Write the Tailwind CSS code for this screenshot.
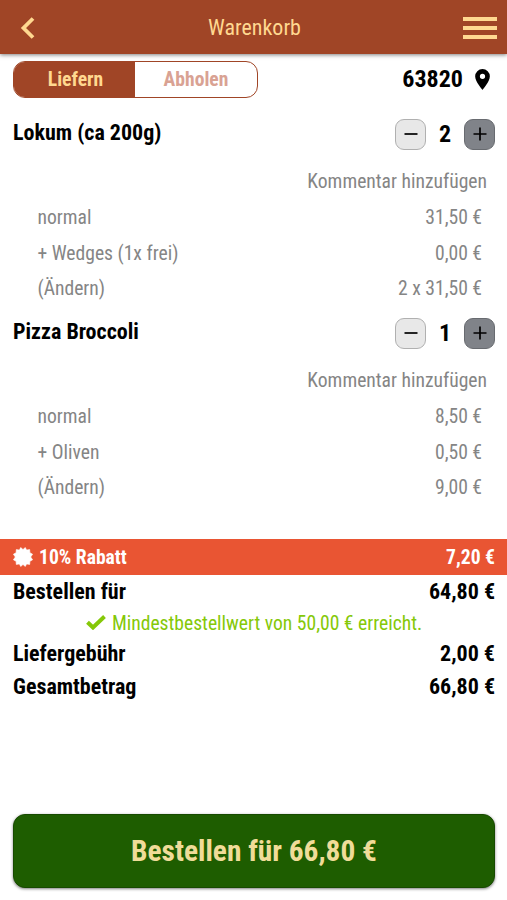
<!DOCTYPE html>
<html lang="de">
<head>
  <meta charset="UTF-8" />
  <meta name="viewport" content="width=device-width, initial-scale=1.0"/>
  <title>Warenkorb</title>
  <script src="https://cdn.jsdelivr.net/npm/@tailwindcss/browser@4"></script>
</head>
<body class="bg-white min-h-screen flex flex-col font-['Roboto_Condensed','Roboto',sans-serif] font-stretch-condensed text-[22px] text-black">

  <!-- Header -->
  <header class="h-[54px] shrink-0 bg-[#a04526] shadow-[0_1px_4px_rgba(0,0,0,0.5)] flex items-center justify-between pl-5 pr-[10px] text-[#ffd890]">
    <button class="w-[26px]">
      <svg class="w-[15px] h-[22px] mt-[2px]" viewBox="0 0 15 22" fill="none" stroke="currentColor" stroke-width="3.8"><path d="M13 1.500 3.500 11l9.500 9.500"/></svg>
    </button>
    <h1>Warenkorb</h1>
    <button>
      <svg class="w-[34px] h-6 mt-[2px]" viewBox="0 0 34 24" fill="currentColor"><path d="M0 1h34v4H0zM0 10h34v4H0zM0 19h34v4H0z"/></svg>
    </button>
  </header>

  <!-- Delivery mode -->
  <div class="h-[50px] -mb-[2px] flex items-center justify-between px-[13px]">
    <div class="w-[245px] h-[37px] flex rounded-[12px] border border-[#a04526] overflow-hidden text-[19.6px] font-bold">
      <button class="w-[121px] pl-[2px] pt-[2px] bg-[#a04526] text-[#ffd890]">Liefern</button>
      <button class="flex-1 pt-[2px] text-[#d9a293]">Abholen</button>
    </div>
    <div class="flex items-center gap-3 pr-1 text-[24px] font-bold">
      <span>63820</span>
      <svg class="w-[15px] h-[21px]" viewBox="0 0 14 20" fill="currentColor"><path fill-rule="evenodd" d="M7 0a7 7 0 0 0-7 7c0 5.2 7 13 7 13s7-7.800 7-13a7 7 0 0 0-7-7Zm0 9.500a2.500 2.500 0 1 1 0-5 2.500 2.500 0 0 1 0 5Z"/></svg>
    </div>
  </div>

  <!-- First item -->
  <section class="h-[199px] pt-[14px]">
    <div class="h-9 flex items-center justify-between pl-[13px] pr-3 font-bold">
      <h2 class="-mt-[3px]">Lokum (ca 200g)</h2>
      <div class="flex items-center text-[24px]">
        <button class="w-[31px] h-[31px] rounded-[9px] border border-[#b0b0b0] bg-[#e8e8e8] flex items-center justify-center">
          <svg class="w-[14px] h-[14px]" viewBox="0 0 14 14" stroke="currentColor" stroke-width="1.7"><path d="M0.500 7h13"/></svg>
        </button>
        <span class="w-[38px] text-center">2</span>
        <button class="w-[31px] h-[31px] rounded-[9px] border border-[#686b70] bg-[#808389] flex items-center justify-center">
          <svg class="w-[14px] h-[14px]" viewBox="0 0 14 14" stroke="currentColor" stroke-width="1.7"><path d="M0.500 7h13M7 0.500v13"/></svg>
        </button>
      </div>
    </div>
    <p class="mt-3 pr-5 leading-[36px] text-right text-[19.6px] text-[#858585]">Kommentar hinzufügen</p>
    <div class="pl-[37.500px] pr-[25px] leading-[35.5px] text-[19.6px] text-[#858585]">
      <div class="flex justify-between"><span>normal</span><span>31,50 €</span></div>
      <div class="flex justify-between"><span>+ Wedges (1x frei)</span><span>0,00 €</span></div>
      <div class="flex justify-between"><span>(Ändern)</span><span>2 x 31,50 €</span></div>
    </div>
  </section>

  <!-- Second item -->
  <section class="h-[237px] pt-[14px]">
    <div class="h-9 flex items-center justify-between pl-[13px] pr-3 font-bold">
      <h2 class="-mt-[3px]">Pizza Broccoli</h2>
      <div class="flex items-center text-[24px]">
        <button class="w-[31px] h-[31px] rounded-[9px] border border-[#b0b0b0] bg-[#e8e8e8] flex items-center justify-center">
          <svg class="w-[14px] h-[14px]" viewBox="0 0 14 14" stroke="currentColor" stroke-width="1.7"><path d="M0.500 7h13"/></svg>
        </button>
        <span class="w-[38px] text-center">1</span>
        <button class="w-[31px] h-[31px] rounded-[9px] border border-[#686b70] bg-[#808389] flex items-center justify-center">
          <svg class="w-[14px] h-[14px]" viewBox="0 0 14 14" stroke="currentColor" stroke-width="1.7"><path d="M0.500 7h13M7 0.500v13"/></svg>
        </button>
      </div>
    </div>
    <p class="mt-3 pr-5 leading-[36px] text-right text-[19.6px] text-[#858585]">Kommentar hinzufügen</p>
    <div class="pl-[37.500px] pr-[25px] leading-[35.5px] text-[19.6px] text-[#858585]">
      <div class="flex justify-between"><span>normal</span><span>8,50 €</span></div>
      <div class="flex justify-between"><span>+ Oliven</span><span>0,50 €</span></div>
      <div class="flex justify-between"><span>(Ändern)</span><span>9,00 €</span></div>
    </div>
  </section>

  <!-- Discount -->
  <div class="mt-[1px] h-9 bg-[#e95533] flex items-center pl-[13px] pr-3 text-[19.6px] font-bold text-white">
    <svg class="w-5 h-5 mr-[6px]" viewBox="0 0 20 20" fill="currentColor" stroke="currentColor" stroke-width="0.6" stroke-linejoin="round"><path d="M10 2.500 12.300.500 13.600 3.100 16.700 2.600 16.900 5.700 19.600 7.200 17.700 10 19.600 12.800 16.900 14.300 16.700 17.400 13.600 16.900 12.300 19.500 10 17.500 7.700 19.500 6.400 16.900 3.300 17.400 3.100 14.300.400 12.800 2.300 10 .400 7.200 3.100 5.700 3.300 2.600 6.400 3.100 7.700.500z"/></svg>
    <span class="pt-[2px]">10% Rabatt</span>
    <span class="ml-auto pt-[2px]">7,20 €</span>
  </div>

  <!-- Totals -->
  <div class="pl-[13px] pr-3 leading-[33px] font-bold">
    <div class="flex justify-between"><span>Bestellen für</span><span>64,80 €</span></div>
    <div class="h-[29px] flex items-center justify-center text-[19.6px] font-normal text-[#85c808]">
      <svg class="w-5 h-[15px] mr-[6px]" viewBox="0 0 20 15" fill="none" stroke="currentColor" stroke-width="4"><path d="M1.500 7.200 7 12.500 18.500 1.500"/></svg>
      <span class="pt-[2px]">Mindestbestellwert von 50,00 € erreicht.</span>
    </div>
    <div class="flex justify-between"><span>Liefergebühr</span><span>2,00 €</span></div>
    <div class="flex justify-between"><span>Gesamtbetrag</span><span>66,80 €</span></div>
  </div>

  <!-- Order button -->
  <button class="mt-auto ml-[13px] mr-3 mb-3 h-[74px] rounded-[12px] border border-[#174a00] bg-[#1e5d00] shadow-[0_1px_3px_rgba(0,0,0,0.5)] text-[29.400px] font-bold text-[#f0dc98]">Bestellen für 66,80 €</button>

</body>
</html>
